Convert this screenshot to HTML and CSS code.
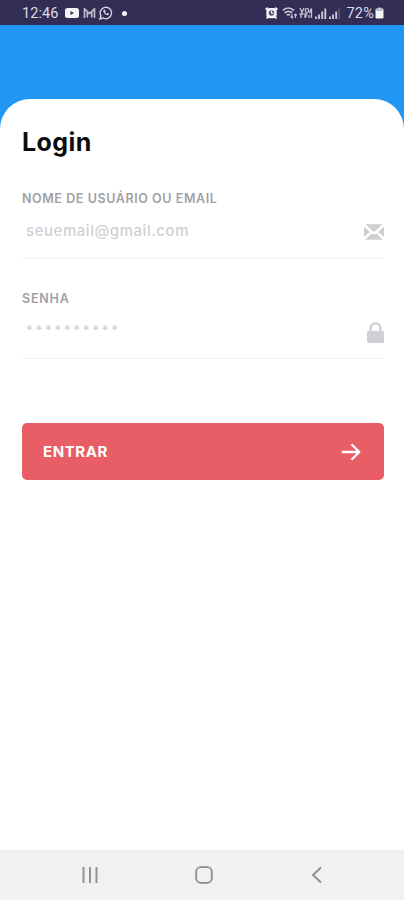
FILE: index.html
```html
<!DOCTYPE html>
<html lang="pt-BR">
<head>
	<meta charset="UTF-8">
	<meta name="viewport" content="width=device-width, initial-scale=1.0">
	<title>Login</title>
	<link rel="stylesheet" href="styles.css">
</head>
<body>
	<div class="status-bar">
		<div class="status-left">
			<span class="clock">12:46</span>
			<svg class="i-video" width="14" height="10" viewBox="0 0 14 10"><rect width="14" height="10" rx="2.5" fill="#f4f3f8"/><path d="M5.5 3v4L9 5z" fill="#322d54"/></svg>
			<svg class="i-mail" width="13" height="10" viewBox="0 0 13 10"><path d="M1.500 10V.8l5 4.700 5-4.700V10M4.300 9.500V4M8.700 9.500V4" fill="none" stroke="#bdbacd" stroke-width="1.700"/></svg>
			<svg class="i-chat" width="14" height="14" viewBox="0 0 14 14"><path d="M1 13l.9-3.200A5.700 5.700 0 1 1 4.200 12z" fill="none" stroke="#d5d3df" stroke-width="1.400"/><path d="M4.700 3.800c-1 1-.3 2.700 1 4s3 2 4 1l.3-1-1.600-.8-.8.7C6.700 7.300 6.200 6.700 6 6l.6-.7-.7-1.600z" fill="#d5d3df"/></svg>
			<span class="dot"></span>
		</div>
		<div class="status-right">
			<svg class="i-alarm" width="13" height="12" viewBox="0 0 13 12"><path d="M.5 2.500L3 .8M12.500 2.500L10 .8M3 10l-1.500 1.500M10 10l1.500 1.500" stroke="#f4f3f8" stroke-width="1.700"/><rect x="1.300" y="1" width="10.400" height="10.300" rx="3.500" fill="#f4f3f8"/><circle cx="6.500" cy="6" r="2.800" fill="#5b5679"/><path d="M6.500 3.800v2.400h2" fill="none" stroke="#fff"/></svg>
			<svg class="i-wifi" width="16" height="12" viewBox="0 0 16 12"><path d="M.7 3.500C4 .4 8.500.4 12 3.500M2.700 6c2.300-2 5.200-2 7.500 0M4.800 8.200c1-.8 2.300-.8 3.300 0" fill="none" stroke="#c9c7d6" stroke-width="1.700"/><path d="M10 7v4M8.600 9.600L10 11l1.300-1.400M13.500 11V7M12.200 8.400l1.300-1.400 1.400 1.400" fill="none" stroke="#c9c7d6" stroke-width="1.100"/></svg>
			<svg class="i-volte" width="14" height="12" viewBox="0 0 14 12"><path d="M1 1l2 4.500L5 1M2 11V7M.5 7h4M6 11V7h2.500M6 9h2" fill="none" stroke="#c9c7d6" stroke-width="1.300"/><circle cx="8" cy="3.500" r="1.800" fill="none" stroke="#c9c7d6" stroke-width="1.200"/><path d="M10.500 6l2-4.500V11M10 8v3" fill="none" stroke="#c9c7d6" stroke-width="1.300"/></svg>
			<svg class="i-signal" width="12" height="11" viewBox="0 0 12 11"><path d="M1 11V8.500M4 11V6.500M7.200 11V3.500M10.300 11V.5" stroke="#c9c7d6" stroke-width="1.900"/></svg>
			<svg class="i-signal" width="12" height="11" viewBox="0 0 12 11"><path d="M1 11V8.500M4 11V6.500M7.200 11V3.500" stroke="#c9c7d6" stroke-width="1.900"/><path d="M10.300 11V.5" stroke="#58536f" stroke-width="1.700"/></svg>
			<span class="battery-text">72%</span>
			<svg class="i-battery" width="9" height="12" viewBox="0 0 9 12"><path d="M3 .5h3V2H3z" fill="#aaa7bc"/><rect x=".5" y="1.500" width="8" height="10" rx="1.200" fill="#f4f3f8"/><path d="M1.300 2.300h6.400v1.500H1.300z" fill="#aaa7bc"/></svg>
		</div>
	</div>

	<main class="screen">
		<form class="card">
			<h1>Login</h1>

			<div class="field">
				<label class="label-user">NOME DE USUÁRIO OU EMAIL</label>
				<div class="input-row">
					<span class="placeholder">seuemail@gmail.com</span>
					<svg width="20" height="16" viewBox="0 0 20 16"><path d="M1.500.3h17L11.700 6.800q-1.700 1.300-3.400 0zM0 2.800l6 5.100-6 5zM20 2.800l-6 5.100 6 5zM1 15.700l6.600-6.200q2.400 1.700 4.800 0L19 15.700z" fill="#cfd0d3"/></svg>
				</div>
			</div>

			<div class="field">
				<label class="label-pass">SENHA</label>
				<div class="input-row">
					<span class="placeholder password">**********</span>
					<svg class="i-lock" width="17" height="21" viewBox="0 0 17 21"><path d="M3.600 10V6.200a4.900 4.900 0 0 1 9.800 0V10" fill="none" stroke="#cfd0d3" stroke-width="2.400"/><rect y="9" width="17" height="12" rx="1.200" fill="#cfd0d3"/></svg>
				</div>
			</div>

			<button type="button" class="btn">
				<span>ENTRAR</span>
				<svg width="20" height="18" viewBox="0 0 20 18"><path d="M.7 9h17.500M10.500 1.200L18.300 9l-7.800 7.800" fill="none" stroke="#fff" stroke-width="2.300" stroke-linejoin="round"/></svg>
			</button>
		</form>
	</main>

	<nav class="nav-bar">
		<svg width="18" height="18" viewBox="0 0 18 18"><path d="M2.500 1v16M9 1v16M15.500 1v16" stroke="#929292" stroke-width="2"/></svg>
		<svg width="18" height="18" viewBox="0 0 18 18"><rect x="1.200" y="1.200" width="15.600" height="15.600" rx="4.500" fill="none" stroke="#8c8c8c" stroke-width="1.800"/></svg>
		<svg width="18" height="18" viewBox="0 0 18 18"><path d="M13 1.500L5 9l8 7.500" fill="none" stroke="#8c8c8c" stroke-width="1.800"/></svg>
	</nav>
</body>
</html>
```

FILE: styles.css
```css
* {
	box-sizing: border-box;
}

body {
	display: flex;
	flex-direction: column;
	height: 100vh;
	margin: 0;
	background-color: #2196f3;
	font-family: Inter, "Liberation Sans", sans-serif;
}

svg {
	display: block;
	flex: none;
}

/* status bar */
.status-bar {
	display: flex;
	justify-content: space-between;
	flex: none;
	height: 25px;
	padding: 1px 20px 0 22px;
	background-color: #322d54;
	color: #dddbe6;
	font-family: Roboto, sans-serif;
	font-size: 14.5px;
}

.status-left,
.status-right {
	display: flex;
	align-items: center;
}

.clock {
	letter-spacing: 0.1px;
}

.i-video {
	margin-left: 6px;
}

.i-mail {
	margin-left: 4px;
}

.i-chat {
	margin-left: 3px;
}

.dot {
	width: 5px;
	height: 5px;
	margin-left: 9px;
	border-radius: 50%;
	background-color: #f4f3f8;
}

.i-wifi {
	margin-left: 4px;
}

.i-volte {
	margin-left: 1px;
}

.i-signal {
	margin-left: 2px;
}

.battery-text {
	margin-left: 5px;
	letter-spacing: 0.2px;
}

.i-battery {
	margin-left: 1px;
}

/* login */
.screen {
	flex: 1;
	padding-top: 74px;
}

.card {
	height: 100%;
	padding: 27px 20px 0 22px;
	border-radius: 30px 30px 0 0;
	background-color: #fff;
}

h1 {
	margin: 0 0 33px;
	color: #0c0c0c;
	font-size: 25px;
	font-weight: 700;
	line-height: 32px;
	letter-spacing: 0.4px;
}

.field {
	height: 68px;
	margin-bottom: 32px;
	border-bottom: 1px solid #f1f1f2;
}

.field label {
	display: block;
	color: #a0a1a5;
	font-size: 12.5px;
	font-weight: 600;
	line-height: 16px;
}

.label-user {
	letter-spacing: 0.58px;
}

.label-pass {
	letter-spacing: 0.8px;
}

.input-row {
	display: flex;
	align-items: center;
	justify-content: space-between;
	height: 50px;
	padding-left: 4px;
}

.placeholder {
	padding-bottom: 2px;
	color: #cfd0d3;
	font-size: 15px;
	font-weight: 500;
	line-height: 20px;
	letter-spacing: 0.55px;
}

.password {
	padding-bottom: 5px;
	font-size: 13px;
	letter-spacing: 2.7px;
}

.btn {
	display: flex;
	align-items: center;
	justify-content: space-between;
	width: 100%;
	height: 57px;
	margin-top: 64px;
	padding: 0 23px 0 21px;
	border: 0;
	border-radius: 5px;
	background-color: #e95d66;
	color: #fff;
	font-family: inherit;
	font-size: 15px;
	font-weight: 700;
	letter-spacing: 0.6px;
}

/* android navigation */
.nav-bar {
	display: flex;
	justify-content: space-between;
	align-items: center;
	flex: none;
	height: 50px;
	padding: 0 78px 0 81px;
	background-color: #f1f1f1;
}
```
